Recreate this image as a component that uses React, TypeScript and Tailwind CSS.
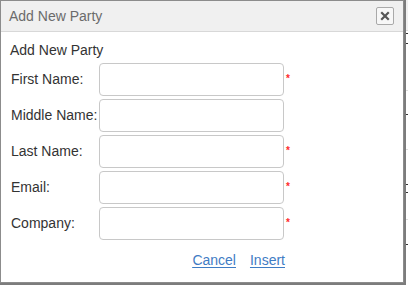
import React from "react";

const fields = [
  { label: "First Name:", required: true },
  { label: "Middle Name:", required: false },
  { label: "Last Name:", required: true },
  { label: "Email:", required: true },
  { label: "Company:", required: true },
];

export default function App() {
  return (
    <div className="relative w-[408px] h-[286px] bg-white overflow-hidden font-['Liberation_Sans',Arial,sans-serif]">
      {/* page behind the dialog */}
      <div className="absolute right-0 top-0 w-[6px] h-full bg-white">
        <div className="h-[31px] bg-[#f0f0f0] border-b border-[#ddd]" />
        <div className="mt-[2px] h-[1px] bg-[#333]" />
        <div className="mt-[9px] h-[1px] bg-[#333]" />
        <div className="mt-[46px] h-[1px] bg-[#ddd]" />
        <div className="mt-[23px] h-[1px] bg-[#333]" />
        <div className="mt-[34px] h-[1px] bg-[#ddd]" />
        <div className="mt-[34px] h-[1px] bg-[#333]" />
        <div className="mt-[7px] h-[1px] bg-[#333]" />
        <div className="mt-[26px] h-[1px] bg-[#ddd]" />
        <div className="mt-[24px] h-[1px] bg-[#333]" />
      </div>

      {/* dialog */}
      <div className="relative w-[404px] h-[283px] bg-white border border-[#8c8c8c] shadow-[1px_1px_0_1px_#7c7c7c] flex flex-col">
        <div className="h-[31px] shrink-0 bg-[#f0f0f0] border-b border-[#d8d8d8] flex items-center justify-between pl-[8px] pr-[9px]">
          <span className="text-[14px] text-[#6b6b6b]">Add New Party</span>
          <button className="w-[18px] h-[18px] border border-[#a9a9a9] rounded-[2px] bg-[#f7f7f7] flex items-center justify-center">
            <svg width="10" height="10" viewBox="0 0 10 10">
              <path d="M2 2 L8 8 M8 2 L2 8" stroke="#555" strokeWidth="2.2" strokeLinecap="square" />
            </svg>
          </button>
        </div>

        <div className="pl-[9px] pt-[8px]">
          <div className="text-[14px] text-[#333] leading-[20px]">Add New Party</div>
          <div className="mt-[3px] flex flex-col gap-[3px]">
            {fields.map((f) => (
              <div key={f.label} className="flex items-start">
                <label className="w-[89px] h-[33px] pl-[1px] flex items-center text-[14px] text-[#333] whitespace-nowrap">
                  {f.label}
                </label>
                <input className="w-[185px] h-[33px] border border-[#c8c8c8] rounded-[4px] bg-white outline-none" />
                {f.required && (
                  <span className="ml-[2px] mt-[11px] text-[10px] leading-none text-[#ff2a2a] font-bold">*</span>
                )}
              </div>
            ))}
          </div>
          <div className="mt-[10px] w-[275px] flex justify-end gap-[14px] text-[14px] text-[#3f7cc4] underline underline-offset-[2px]">
            <a href="#">Cancel</a>
            <a href="#">Insert</a>
          </div>
        </div>
      </div>
    </div>
  );
}
